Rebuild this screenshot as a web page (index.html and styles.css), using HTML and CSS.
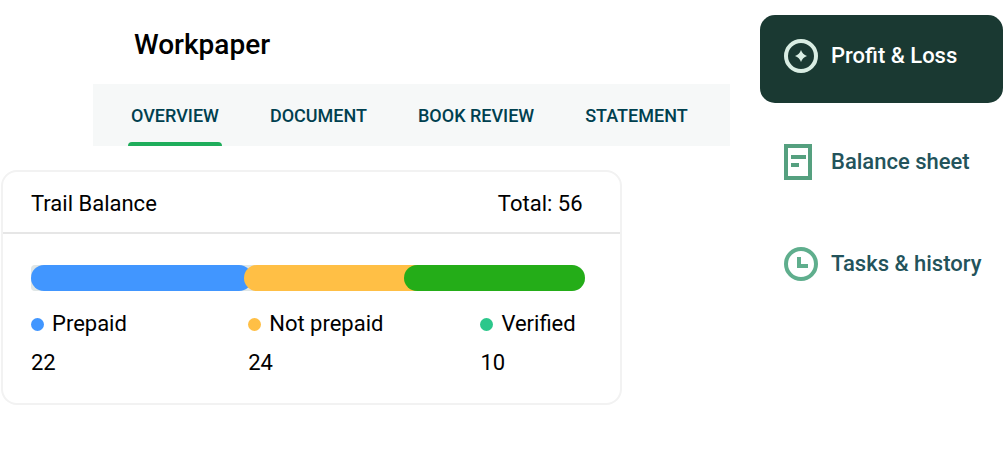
FILE: index.html
```html
<!DOCTYPE html>
<html lang="en">
<head>
    <meta charset="UTF-8">
    <meta name="viewport" content="width=device-width, initial-scale=1.0">
    <title>Workpaper</title>
    <link rel="stylesheet" href="styles.css">
</head>
<body>
    <div class="layout">
        <main class="content">
            <h1>Workpaper</h1>

            <nav class="tabs" aria-label="Workpaper sections">
                <a class="tab active" href="#overview">OVERVIEW</a>
                <a class="tab" href="#document">DOCUMENT</a>
                <a class="tab" href="#book-review">BOOK REVIEW</a>
                <a class="tab" href="#statement">STATEMENT</a>
            </nav>

            <section class="card">
                <header class="card-header">
                    <h2>Trail Balance</h2>
                    <span>Total: 56</span>
                </header>
                <div class="card-body">
                    <div class="bar">
                        <div class="segment prepaid" style="width: 40%"></div>
                        <div class="segment not-prepaid" style="width: 31%"></div>
                        <div class="segment verified"></div>
                    </div>
                    <dl class="legend">
                        <div class="legend-item">
                            <dt><span class="dot prepaid"></span>Prepaid</dt>
                            <dd>22</dd>
                        </div>
                        <div class="legend-item">
                            <dt><span class="dot not-prepaid"></span>Not prepaid</dt>
                            <dd>24</dd>
                        </div>
                        <div class="legend-item">
                            <dt><span class="dot done"></span>Verified</dt>
                            <dd>10</dd>
                        </div>
                    </dl>
                </div>
            </section>
        </main>

        <nav class="sidebar" aria-label="Reports">
            <a class="side-link current" href="#profit-loss">
                <svg class="icon" viewBox="0 0 34 34" aria-hidden="true">
                    <circle cx="17" cy="17" r="15" fill="none" stroke="#d9ede3" stroke-width="4"/>
                    <path d="M17 11 Q18.5 15.5 23 17 Q18.5 18.5 17 23 Q15.5 18.5 11 17 Q15.5 15.5 17 11Z" fill="#d9ede3"/>
                </svg>
                Profit &amp; Loss
            </a>
            <a class="side-link" href="#balance-sheet">
                <svg class="icon" viewBox="0 0 34 36" aria-hidden="true">
                    <path d="M2 2H26V34H2Z" fill="none" stroke="#55a07f" stroke-width="4"/>
                    <path d="M7 13H22M7 21H15" fill="none" stroke="#55a07f" stroke-width="4"/>
                </svg>
                Balance sheet
            </a>
            <a class="side-link" href="#tasks-history">
                <svg class="icon" viewBox="0 0 34 34" aria-hidden="true">
                    <circle cx="17" cy="17" r="15" fill="none" stroke="#5fae8d" stroke-width="4"/>
                    <path d="M15 10V19H24" fill="none" stroke="#5fae8d" stroke-width="4"/>
                </svg>
                Tasks &amp; history
            </a>
        </nav>
    </div>
</body>
</html>
```

FILE: styles.css
```css
* {
    margin: 0;
    padding: 0;
    box-sizing: border-box;
}

body {
    font-family: Roboto, 'Liberation Sans', sans-serif;
    font-size: 22px;
    line-height: 28px;
    color: #000;
    background: #fff;
}

a {
    text-decoration: none;
}

.layout {
    display: grid;
    grid-template-columns: minmax(0, 1fr) 243px;
    gap: 30px;
    padding-top: 15px;
}

h1 {
    margin: 16px 0 25px 134px;
    font-size: 28px;
    line-height: 28px;
    font-weight: 500;
}

.tabs {
    display: flex;
    gap: 45px;
    margin-left: 93px;
    padding: 0 35px;
    background: #f6f8f8;
}

.tab {
    padding: 18px 3px 16px;
    font-size: 18px;
    font-weight: 500;
    color: #00404f;
    white-space: nowrap;
}

.tab.active {
    position: relative;
}

.tab.active::after {
    content: "";
    position: absolute;
    left: 0;
    right: 0;
    bottom: 0;
    height: 4px;
    border-radius: 4px 4px 0 0;
    background: #1fad5b;
}

.card {
    width: 85%;
    margin: 24px 0 0 1px;
    border: 2px solid #f2f2f2;
    border-radius: 16px;
}

.card-header {
    display: flex;
    justify-content: space-between;
    padding: 18px 37px 14px 28px;
    border-bottom: 2px solid #e6e6e6;
}

.card-header h2 {
    font-size: inherit;
    font-weight: 400;
}

.card-body {
    padding: 31px 35px 26px 28px;
}

.bar {
    display: flex;
    height: 26px;
    border-radius: 4px 13px 13px 4px;
    background: #dfe6e6;
}

/* each segment tucks its round start over the end of the one before */
.segment {
    border-radius: 13px;
}

.segment + .segment {
    margin-left: -8px;
}

.segment.not-prepaid {
    border-radius: 13px 0 0 13px;
}

.segment.verified {
    flex: 1;
    margin-left: -12px;
}

.prepaid {
    background: #4196ff;
}

.not-prepaid {
    background: #ffbf45;
}

.verified {
    background: #24ad18;
}

.done {
    background: #2cc78b;
}

.legend {
    display: grid;
    grid-template-columns: 217fr 232fr 104fr;
    margin-top: 19px;
}

.legend-item dt {
    display: flex;
    align-items: center;
    gap: 8px;
    white-space: nowrap;
}

.legend-item dd {
    margin-top: 11px;
}

.dot {
    width: 13px;
    height: 13px;
    border-radius: 50%;
}

.side-link {
    display: flex;
    align-items: center;
    gap: 13px;
    padding: 0 24px;
    margin-bottom: 67px;
    font-weight: 500;
    color: #23535b;
    white-space: nowrap;
}

.side-link.current {
    padding: 24px 24px 30px;
    margin-bottom: 41px;
    border-radius: 15px;
    background: #1a3932;
    color: #fff;
}

.icon {
    flex: none;
    width: 34px;
}
```
